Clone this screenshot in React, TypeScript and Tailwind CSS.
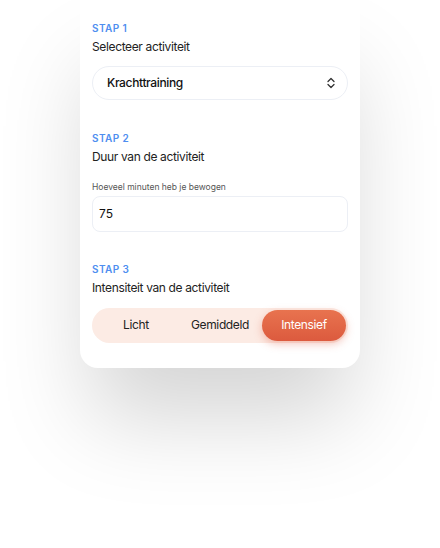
import React, { useState } from "react";

const levels = ["Licht", "Gemiddeld", "Intensief"];

const StepHeader = ({ step, title }: { step: number; title: string }) => (
  <div>
    <div className="text-[10px] font-semibold tracking-[0.04em] text-[#4e8ef0] leading-none">
      STAP {step}
    </div>
    <div className="mt-[8px] text-[12px] tracking-[-0.03em] text-[#222] leading-none">{title}</div>
  </div>
);

const ChevronUpDown = () => (
  <svg width="10" height="12" viewBox="0 0 10 12" fill="none" stroke="#333" strokeWidth="1.3" strokeLinecap="round" strokeLinejoin="round">
    <path d="M2 4.5 5 1.5 8 4.5" />
    <path d="M2 7.5 5 10.5 8 7.5" />
  </svg>
);

export default function App() {
  const [level, setLevel] = useState(2);

  return (
    <div className="h-[548px] w-full bg-white overflow-hidden [font-family:Inter,sans-serif]">
      <div className="mx-auto w-[280px] bg-white rounded-b-[18px] px-3 pt-[23px] pb-[25px] shadow-[0_60px_90px_-10px_rgba(0,0,0,0.17)]">
        <StepHeader step={1} title="Selecteer activiteit" />
        <div className="mt-[13px] h-[34px] rounded-full border border-[#eceff5] flex items-center justify-between pl-[14px] pr-[11px]">
          <span className="text-[12px] tracking-[-0.03em] font-medium text-[#111]">Krachttraining</span>
          <ChevronUpDown />
        </div>

        <div className="mt-[33px]">
          <StepHeader step={2} title="Duur van de activiteit" />
        </div>
        <div className="mt-[20px] text-[8.5px] text-[#555] leading-none">Hoeveel minuten heb je bewogen</div>
        <div className="mt-[4px] h-[36px] rounded-lg border border-[#eceff5] flex items-center px-[6px] text-[12px] text-[#111]">
          75
        </div>

        <div className="mt-[32px]">
          <StepHeader step={3} title="Intensiteit van de activiteit" />
        </div>
        <div className="mt-[14px] h-[35px] rounded-full bg-[#fcebe4] p-[2px] flex">
          {levels.map((l, i) => (
            <button
              key={l}
              onClick={() => setLevel(i)}
              className={
                i === level
                  ? "flex-1 rounded-full text-[12px] tracking-[-0.03em] text-white bg-gradient-to-b from-[#e8734f] to-[#dc5a3e] shadow-[0_3px_8px_rgba(220,90,62,0.35)]"
                  : "flex-1 rounded-full text-[12px] tracking-[-0.03em] text-[#222]"
              }
            >
              {l}
            </button>
          ))}
        </div>
      </div>
    </div>
  );
}
